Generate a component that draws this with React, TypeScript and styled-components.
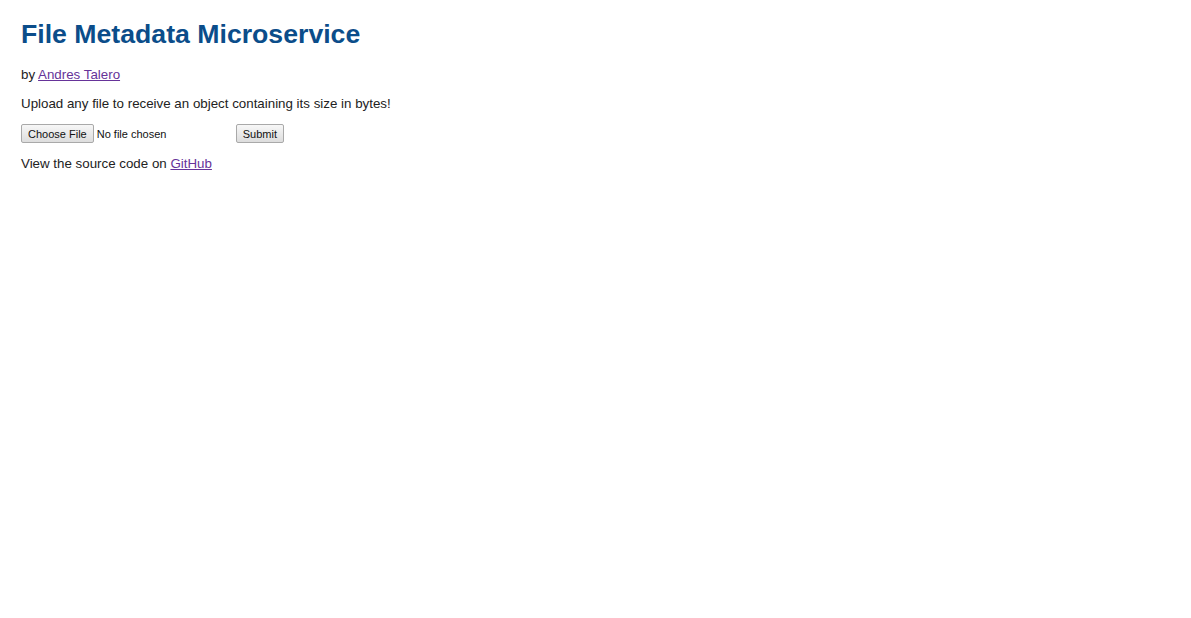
import React, { useState } from "react"
import styled, { createGlobalStyle } from "styled-components"

const GlobalStyle = createGlobalStyle`
  html, body {
    margin: 0;
    padding: 0;
    background: #fff;
  }
  body {
    font-family: "Liberation Sans", Arial, sans-serif;
    font-size: 13.33px;
    color: #222;
  }
`

const Page = styled.main`
  padding: 18px 21px;
`

const Title = styled.h1`
  margin: 0 0 17px;
  font-size: 26.67px;
  line-height: 32px;
  font-weight: bold;
  color: #0b4d8a;
`

const Text = styled.p<{ $space?: number }>`
  margin: 0 0 ${(p) => p.$space ?? 13}px;
  font-size: 13.33px;
  line-height: 16px;
`

const Link = styled.a`
  color: #663399;
  text-decoration: underline;
`

const UploadForm = styled.form`
  display: flex;
  align-items: center;
  margin: 0 0 13px;
  height: 19px;
`

const HiddenInput = styled.input`
  display: none;
`

const Button = styled.button`
  box-sizing: border-box;
  height: 19px;
  padding: 0 6px;
  margin: 0;
  font-family: "Liberation Sans", Arial, sans-serif;
  font-size: 11px;
  color: #111;
  border: 1px solid #a9a9a9;
  border-radius: 2px;
  background: linear-gradient(#f7f7f7, #dddddd);
  cursor: default;
  display: inline-flex;
  align-items: center;
`

const FileName = styled.span`
  width: 139px;
  padding-left: 3px;
  font-size: 11px;
  color: #111;
`

const App: React.FC = () => {
  const [file, setFile] = useState<string | null>(null)
  const inputRef = React.useRef<HTMLInputElement>(null)

  return (
    <>
      <GlobalStyle />
      <Page>
        <Title>File Metadata Microservice</Title>
        <Text>
          by <Link href="#">Andres Talero</Link>
        </Text>
        <Text $space={12}>Upload any file to receive an object containing its size in bytes!</Text>
        <UploadForm onSubmit={(e) => e.preventDefault()}>
          <HiddenInput
            ref={inputRef}
            type="file"
            onChange={(e) => setFile(e.target.files?.[0]?.name ?? null)}
          />
          <Button type="button" onClick={() => inputRef.current?.click()}>
            Choose File
          </Button>
          <FileName>{file ?? "No file chosen"}</FileName>
          <Button type="submit">Submit</Button>
        </UploadForm>
        <Text>
          View the source code on <Link href="#">GitHub</Link>
        </Text>
      </Page>
    </>
  )
}

export default App
